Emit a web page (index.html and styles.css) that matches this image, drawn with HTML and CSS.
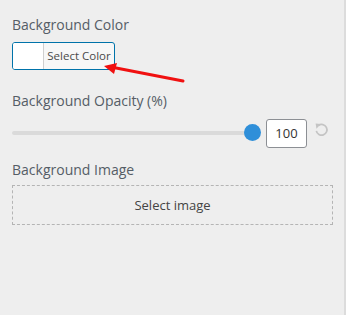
FILE: index.html
```html
<!DOCTYPE html>
<html>
<head>
<meta charset="utf-8">
<link rel="stylesheet" href="styles.css">
</head>
<body>
<div class="panel">
  <div class="field field-color">
    <div class="label">Background Color</div>
    <div class="color-row">
      <button class="color-btn"><span class="swatch"></span><span class="color-text">Select Color</span></button>
      <svg class="arrow" width="90" height="30" viewBox="0 0 90 30">
        <line x1="80" y1="17" x2="8" y2="3" stroke="#f01010" stroke-width="3" stroke-linecap="round"/>
        <polygon points="1,2 14,-1 11,10" fill="#f01010"/>
      </svg>
    </div>
  </div>
  <div class="field">
    <div class="label">Background Opacity (%)</div>
    <div class="slider-row">
      <div class="track"><div class="thumb"></div></div>
      <div class="num">100</div>
      <svg class="reset" width="15" height="15" viewBox="0 0 14 14">
        <path d="M4.2 3.2 A5 5 0 1 1 2.2 8.2" fill="none" stroke="#c4c4c4" stroke-width="1.6"/>
        <polygon points="1.5,1.5 6.3,1.8 2.3,6.2" fill="#c4c4c4"/>
      </svg>
    </div>
  </div>
  <div class="field">
    <div class="label label-img">Background Image</div>
    <div class="img-box">Select image</div>
  </div>
</div>
</body>
</html>
```
FILE: styles.css
```css
html, body {
  margin: 0;
  padding: 0;
}
body {
  width: 346px;
  height: 315px;
  background: #eeeeee;
  font-family: "Open Sans", "Noto Sans", sans-serif;
  color: #555d66;
  overflow: hidden;
}
.panel {
  box-sizing: border-box;
  width: 346px;
  height: 315px;
  border-right: 2px solid #dcdcdc;
  padding: 15px 13px 0 12px;
}
.field {
  margin-bottom: 12px;
}
.field-color {
  margin-bottom: 21px;
}
.label {
  font-size: 14px;
  line-height: 20px;
  color: #555d66;
  margin-bottom: 7px;
}
.label-img {
  margin-bottom: 5px;
}
.color-row {
  position: relative;
  height: 28px;
}
.color-btn {
  display: flex;
  box-sizing: border-box;
  width: 103px;
  height: 28px;
  padding: 0;
  border: 1px solid #0073aa;
  border-radius: 3px;
  background: #f7f7f7;
  font-family: inherit;
  overflow: hidden;
}
.swatch {
  width: 30px;
  height: 100%;
  background: #ffffff;
  border-right: 1px solid #cfcfcf;
}
.color-text {
  flex: 1;
  font-size: 11.5px;
  line-height: 26px;
  color: #4a4a4a;
  text-align: center;
}
.arrow {
  position: absolute;
  left: 91px;
  top: 22px;
  overflow: visible;
}
.slider-row {
  display: flex;
  align-items: center;
  height: 30px;
}
.track {
  position: relative;
  width: 240px;
  height: 4px;
  background: #dadada;
  border-radius: 2px;
}
.thumb {
  position: absolute;
  right: -9px;
  top: -7px;
  width: 17px;
  height: 17px;
  border-radius: 50%;
  background: #2f8fd9;
}
.num {
  box-sizing: border-box;
  width: 41px;
  height: 29px;
  margin-left: 14px;
  border: 1px solid #8c8f94;
  border-radius: 3px;
  background: #ffffff;
  font-size: 13px;
  line-height: 27px;
  text-align: center;
  color: #333;
}
.reset {
  margin-left: 7px;
  margin-top: -8px;
}
.img-box {
  box-sizing: border-box;
  width: 321px;
  height: 40px;
  border: 1px dashed #b4b4b4;
  font-size: 13px;
  line-height: 38px;
  text-align: center;
  color: #444;
}
```
